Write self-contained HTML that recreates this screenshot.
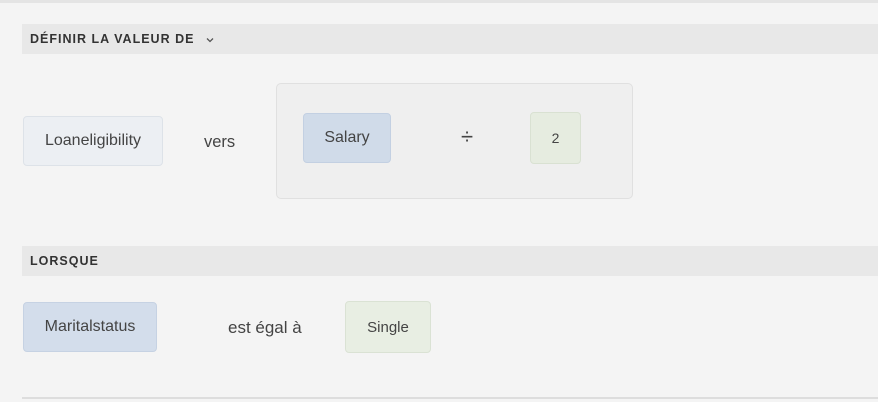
<!DOCTYPE html>
<html><head><meta charset="utf-8"><style>
body{margin:0;width:878px;height:402px;background:#f4f4f4;font-family:"Liberation Sans",sans-serif;position:relative;overflow:hidden;color:#444}
.a{position:absolute;box-sizing:border-box}
.band{left:22px;right:0;height:30px;background:#e8e8e8;font-weight:bold;font-size:12.5px;letter-spacing:1px;color:#333;padding-left:8px;line-height:30px}
.box{display:flex;align-items:center;justify-content:center;font-size:16px;color:#444;border-radius:4px}
.t{font-size:16.5px;color:#444}
</style></head><body>
<div class="a" style="left:0;top:0;width:878px;height:3px;background:#e4e4e4"></div>
<div class="a band" style="top:24px">DÉFINIR LA VALEUR DE <svg width="10" height="8" style="margin-left:6px;vertical-align:middle" viewBox="0 0 10 8"><path d="M2 2.5L5 5.5L8 2.5" fill="none" stroke="#555" stroke-width="1.3"/></svg></div>
<div class="a box" style="left:23px;top:116px;width:140px;height:50px;background:#eceff3;border:1px solid #dde2e8">Loaneligibility</div>
<div class="a t" style="left:204px;top:133px">vers</div>
<div class="a" style="left:276px;top:83px;width:357px;height:116px;background:#efefef;border:1px solid #e0e0e0;border-radius:5px"></div>
<div class="a box" style="left:303px;top:113px;width:88px;height:50px;background:#d0dbe9;border:1px solid #c3d0e2">Salary</div>
<div class="a t" style="left:461px;top:124px;font-size:22px">÷</div>
<div class="a box" style="left:530px;top:112px;width:51px;height:52px;background:#e6ece0;border:1px solid #d9e1d2;font-size:14px">2</div>
<div class="a band" style="top:246px">LORSQUE</div>
<div class="a box" style="left:23px;top:302px;width:134px;height:50px;background:#d3ddeb;border:1px solid #c6d2e3">Maritalstatus</div>
<div class="a t" style="left:228px;top:318px;font-size:17px">est égal à</div>
<div class="a box" style="left:345px;top:301px;width:86px;height:52px;background:#e8eee3;border:1px solid #dae2d4;font-size:15px">Single</div>
<div class="a" style="left:22px;top:397px;right:0;height:2px;background:#dddddd"></div>
</body></html>
